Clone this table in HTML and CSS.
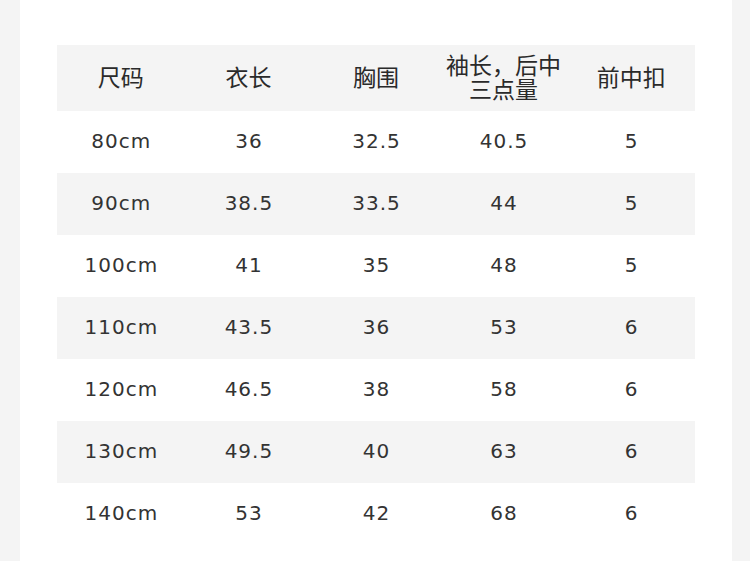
FILE: index.html
```html
<!DOCTYPE html>
<html lang="zh">
<head>
<meta charset="utf-8">
<link rel="stylesheet" href="styles.css">
</head>
<body>
<div class="card">
  <table class="size-table">
    <thead>
      <tr><th>尺码</th><th>衣长</th><th>胸围</th><th class="two">袖长，后中<br>三点量</th><th>前中扣</th></tr>
    </thead>
    <tbody>
      <tr><td>80cm</td><td>36</td><td>32.5</td><td>40.5</td><td>5</td></tr>
      <tr><td>90cm</td><td>38.5</td><td>33.5</td><td>44</td><td>5</td></tr>
      <tr><td>100cm</td><td>41</td><td>35</td><td>48</td><td>5</td></tr>
      <tr><td>110cm</td><td>43.5</td><td>36</td><td>53</td><td>6</td></tr>
      <tr><td>120cm</td><td>46.5</td><td>38</td><td>58</td><td>6</td></tr>
      <tr><td>130cm</td><td>49.5</td><td>40</td><td>63</td><td>6</td></tr>
      <tr><td>140cm</td><td>53</td><td>42</td><td>68</td><td>6</td></tr>
    </tbody>
  </table>
</div>
</body>
</html>
```
FILE: styles.css
```css
html, body {
  margin: 0;
  padding: 0;
  background: #f4f4f4;
  height: 561px;
  overflow: hidden;
}
body {
  padding: 0 18px 0 20px;
}
.card {
  background: #ffffff;
  height: 561px;
  padding: 45px 37px 0 37px;
  box-sizing: border-box;
}
.size-table {
  width: 638px;
  border-collapse: collapse;
  table-layout: fixed;
  font-family: "DejaVu Sans", "Noto Sans CJK SC", sans-serif;
  color: #2a2a2a;
}
.size-table th {
  height: 62px;
  padding: 0 0 4px 0;
  background: #f4f4f4;
  font-family: "Noto Sans CJK SC", sans-serif;
  font-weight: 400;
  font-size: 23px;
  line-height: 28px;
  text-align: center;
  vertical-align: middle;
}
.size-table th.two {
  line-height: 24px;
}
.size-table td {
  height: 60px;
  padding: 0 0 2px 1px;
  font-size: 20px;
  font-weight: 400;
  letter-spacing: 1px;
  color: #333;
  text-align: center;
  vertical-align: middle;
}
.size-table tbody tr:nth-child(even) td {
  background: #f4f4f4;
}
```
